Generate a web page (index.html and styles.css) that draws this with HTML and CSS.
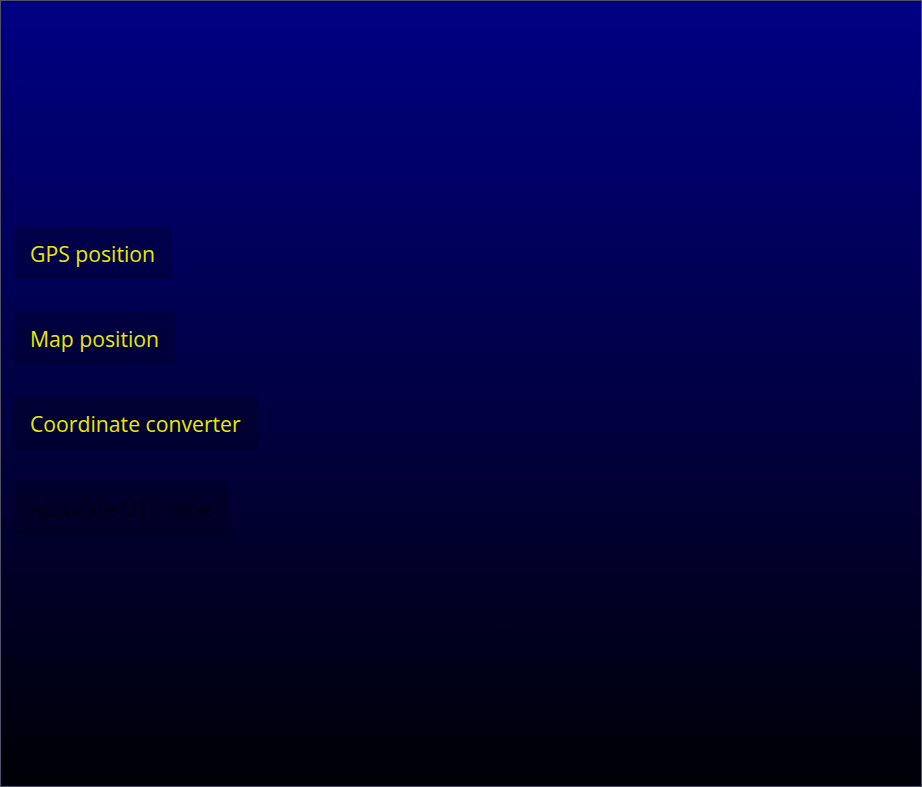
FILE: index.html
```html
<!DOCTYPE html>
<html lang="en">
<head>
<meta charset="utf-8">
<title>GPS tools</title>
<link rel="stylesheet" href="styles.css">
</head>
<body>
<div class="app">
  <nav class="menu">
    <button class="item">GPS position</button>
    <button class="item">Map position</button>
    <button class="item">Coordinate converter</button>
    <button class="item disabled" disabled>Accurate UTC time</button>
  </nav>
</div>
</body>
</html>
```

FILE: styles.css
```css
html, body {
  margin: 0;
  padding: 0;
  height: 100%;
}
body {
  background: #000;
}
.app {
  box-sizing: border-box;
  width: 922px;
  height: 787px;
  border: 1px solid #50506a;
  background: linear-gradient(to bottom, #000084 0%, #00004a 45%, #000006 100%);
  padding: 226px 0 0 12px;
}
.menu {
  display: flex;
  flex-direction: column;
  align-items: flex-start;
  gap: 33px;
}
.item {
  height: 52px;
  padding: 2px 17px 0;
  border: none;
  background: rgba(0, 0, 0, 0.2);
  color: #e8e800;
  font-family: "Open Sans", "Noto Sans", sans-serif;
  font-size: 21.2px;
  line-height: 50px;
  text-align: left;
  cursor: pointer;
}
.item.disabled {
  color: rgba(0, 0, 0, 0.55);
  background: rgba(0, 0, 0, 0.15);
}
```
